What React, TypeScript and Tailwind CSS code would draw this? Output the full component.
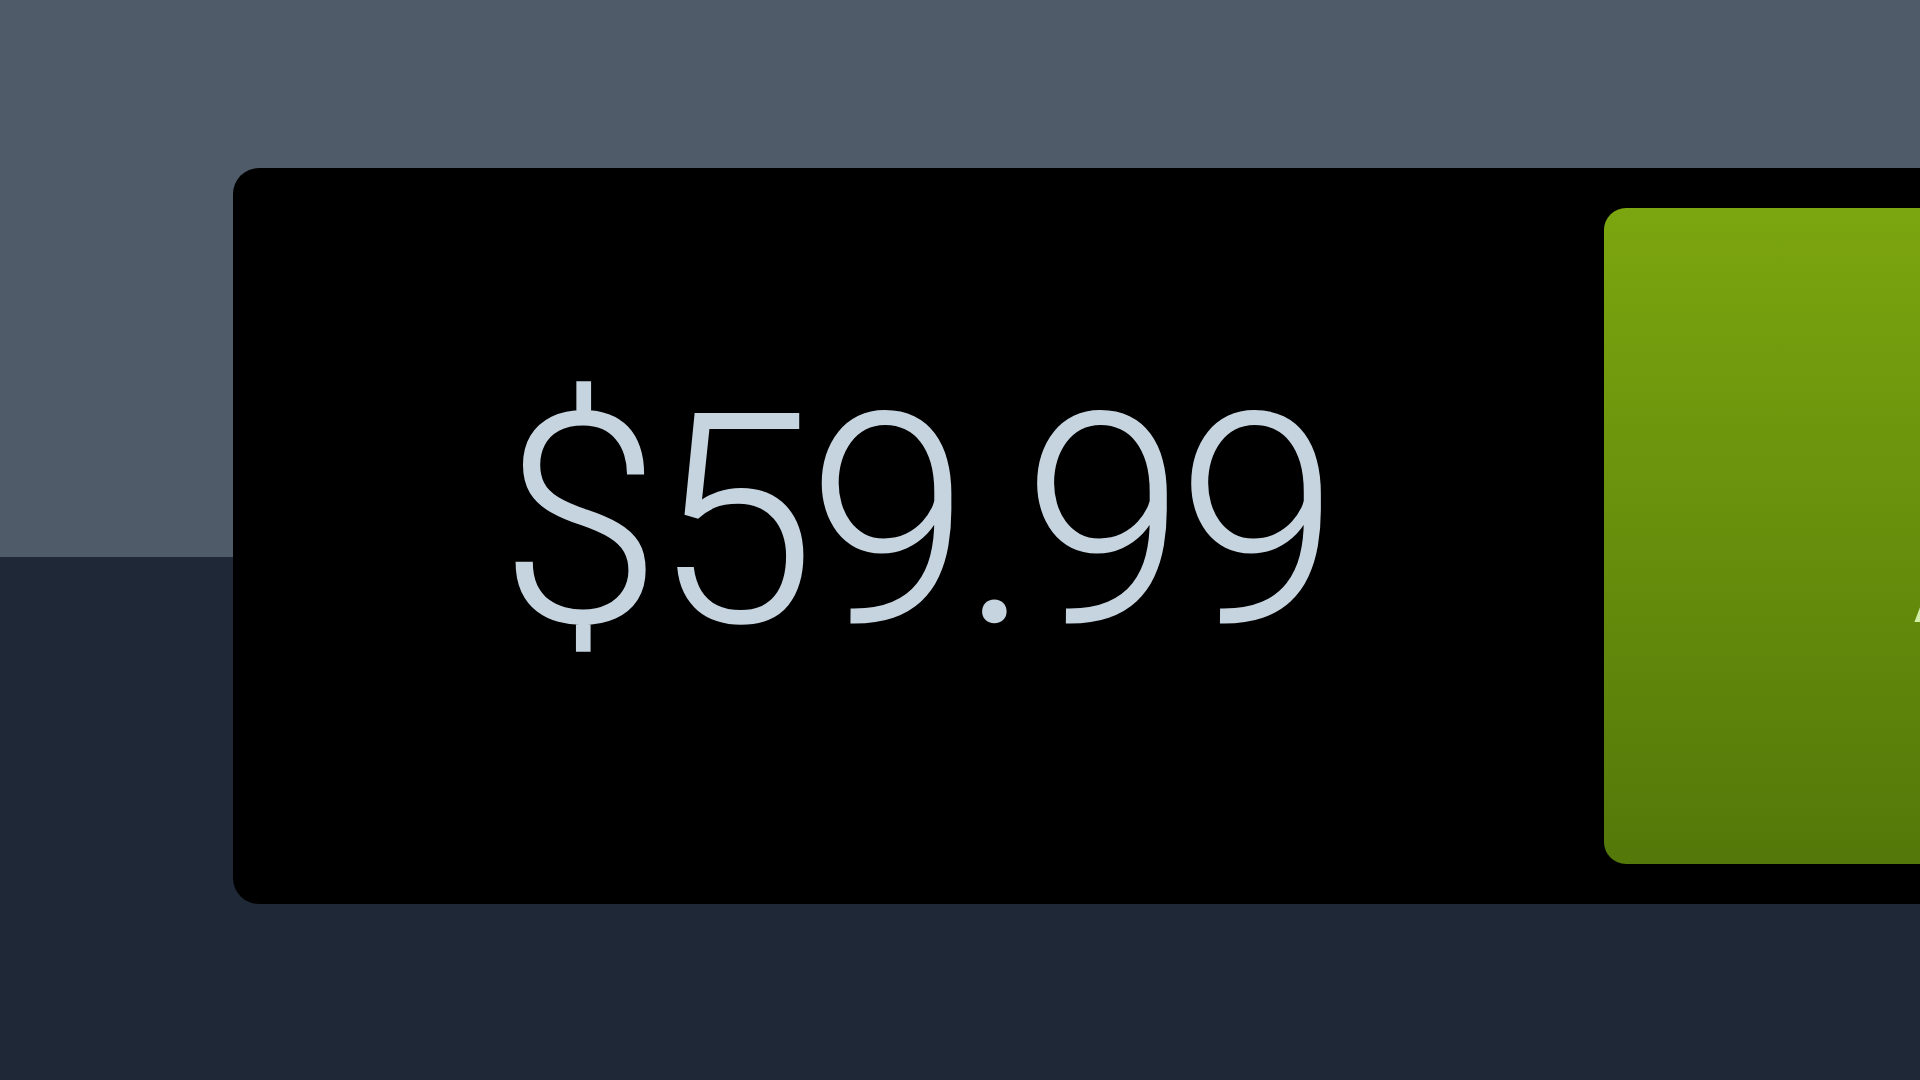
export default function App() {
  return (
    <div className="h-screen w-full overflow-hidden bg-[linear-gradient(to_bottom,#4f5b69_557px,#1e2836_557px)] pt-[168px] pl-[233px] font-['Roboto','Liberation_Sans',Arial,sans-serif]">
      <div className="flex h-[736px] w-[1800px] items-center rounded-[26px] bg-black">
        <div className="flex w-[1371px] shrink-0 items-center pl-[266px] pb-[28px]">
          <span className="text-[294px] font-light leading-none tracking-[-9px] text-[#c6d4df]">$59.99</span>
        </div>
        <button className="flex h-[656px] w-[420px] shrink-0 items-center whitespace-nowrap rounded-[22px] bg-[linear-gradient(to_bottom,#7ca60f,#547809)] pl-[306px] pb-[28px] text-left">
          <span className="text-[294px] font-light leading-none text-[#d2efa9]">Add to Cart</span>
        </button>
      </div>
    </div>
  );
}
